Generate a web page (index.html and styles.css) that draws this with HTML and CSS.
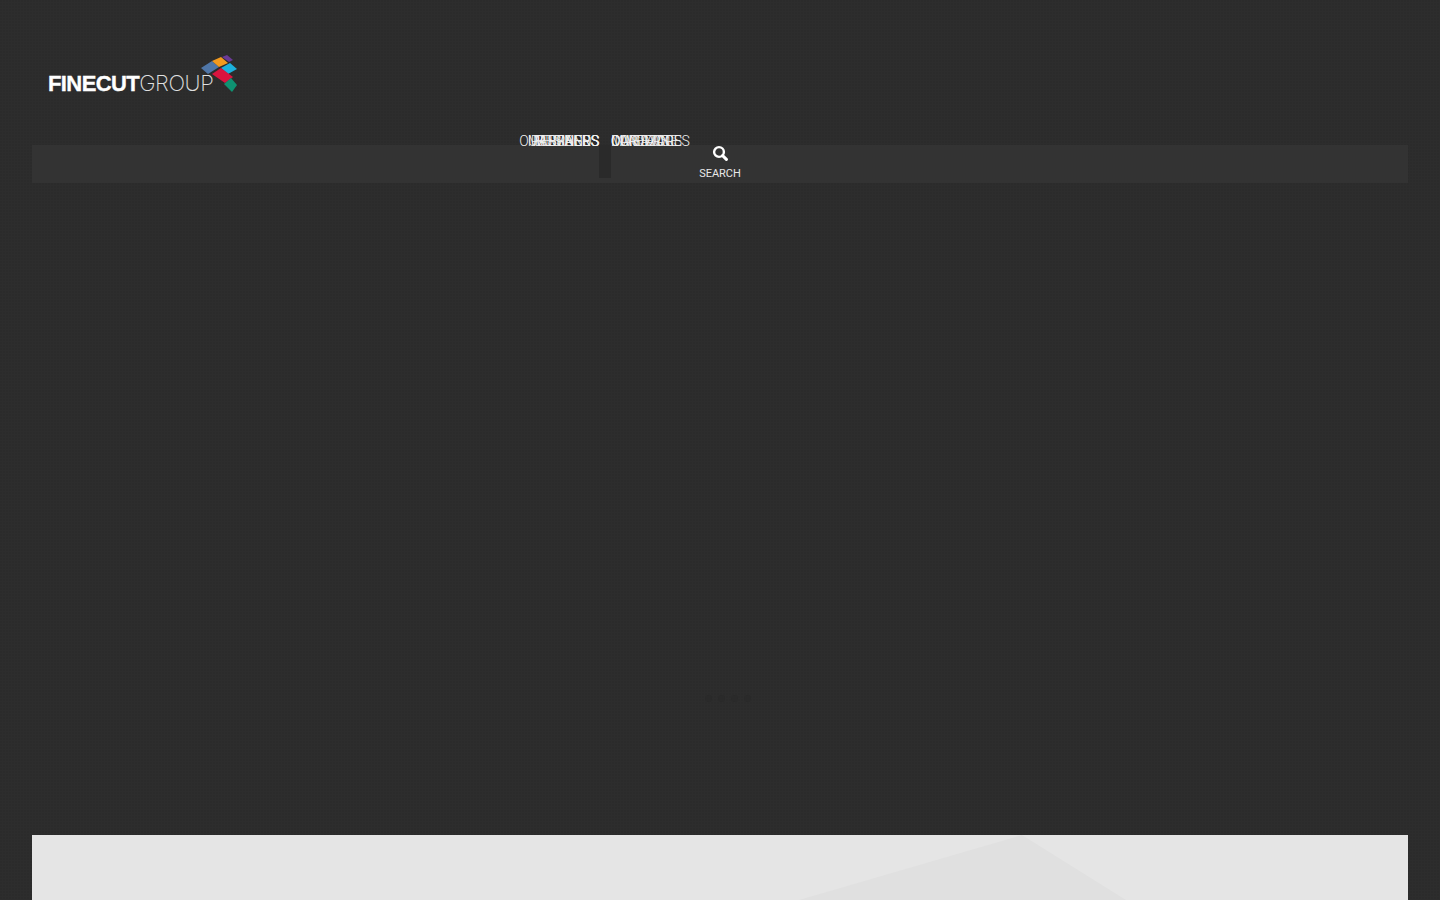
FILE: index.html
```html
<!DOCTYPE html>
<html lang="en">
<head>
<meta charset="utf-8">
<title>Finecut Group</title>
<link rel="stylesheet" href="styles.css">
</head>
<body>
<div class="page">
  <header class="top">
    <a class="logo" href="#">
      <span class="logo-word"><b>FINECUT</b><span class="logo-light">GROUP</span></span>
      <svg class="logo-mark" width="40" height="42" viewBox="0 0 40 42" aria-hidden="true">
        <polygon points="3,16 14,9 21,15 10,22" fill="#4f76a8"/>
        <polygon points="14,9 23,5 30,11 21,15" fill="#f39a1f"/>
        <polygon points="24,5 29,3 35,8 31,10" fill="#6a3a96"/>
        <polygon points="23,16 32,11 39,17 30,22" fill="#1cb0dc"/>
        <polygon points="14,22 23,16 35,25 27,31" fill="#d9143f"/>
        <polygon points="26,32 33,26 39,33 34,40" fill="#0f9272"/>
      </svg>
    </a>
  </header>
  <nav class="bar">
    <div class="side side-left">
      <a class="link link-tight">OUR BRANDS</a>
      <a class="link">MESSAGES</a>
      <a class="link">MEMBERS</a>
      <a class="link">BUSINESS</a>
      <a class="link">PARTNERS</a>
    </div>
    <span class="notch"></span>
    <div class="side side-right">
      <a class="link">CAREERS</a>
      <a class="link">CONTACT</a>
      <a class="link">INVESTORS</a>
      <a class="link">MAGAZINE</a>
      <a class="link">OUR IMAGES</a>
    </div>
    <a class="search">
      <svg width="16" height="16" viewBox="0 0 16 16" aria-hidden="true"><circle cx="7" cy="7" r="4.9" fill="none" stroke="#fff" stroke-width="2.4"/><path d="M10.6 10.6 14.4 14.4" stroke="#fff" stroke-width="3" stroke-linecap="round"/></svg>
      <span>SEARCH</span>
    </a>
  </nav>
  <div class="stage">
    <div class="loader"><i></i><i></i><i></i><i></i></div>
  </div>
  <section class="panel">
    <svg class="panel-shape" width="1376" height="65" viewBox="0 0 1376 65" aria-hidden="true"><polygon points="767,65 990,0 1094,65" fill="#e0e0e0"/></svg>
  </section>
</div>
</body>
</html>
```
FILE: styles.css
```css
html, body { margin: 0; height: 100%; }
body {
  background-color: #2d2d2d;
  background-image: radial-gradient(circle at 1px 1px, #2a2a2a 0.6px, transparent 0.9px);
  background-size: 3px 3px;
  overflow: hidden;
  font-family: Roboto, "Liberation Sans", sans-serif;
}
.page { padding: 0 32px; display: flex; flex-direction: column; height: 900px; }
.top { height: 145px; flex: none; }
.logo { display: inline-flex; align-items: flex-start; margin: 50px 0 0 16px; color: #fff; text-decoration: none; }
.logo-word { font: 22px/1 "Liberation Sans", sans-serif; letter-spacing: -0.6px; margin-top: 22px; white-space: nowrap; }
.logo-word b { font-weight: 700; -webkit-text-stroke: 0.35px #fff; }
.logo-light { font-family: Inter, sans-serif; font-weight: 200; color: #e0e0e0; font-size: 22px; letter-spacing: -0.4px; }
.logo-mark { margin: 2px 0 0 -15px; }
.bar {
  height: 38px; background: #333; position: relative;
  display: grid; grid-template-columns: 567px 12px 1fr; flex: none;
}
.side { display: grid; margin-top: -12px; height: 16px; }
.side .link { grid-area: 1 / 1; font-size: 14px; font-weight: 300; line-height: 16px; color: #f0f0f0; white-space: nowrap; }
.side .link-tight { letter-spacing: -0.5px; }
.side-left .link { justify-self: end; }
.side-right .link { justify-self: start; letter-spacing: -0.3px; }
.notch { height: 33px; background: #2a2a2a; }
.search {
  position: absolute; left: 667px; top: 0; width: 42px;
  display: flex; flex-direction: column; align-items: center; color: #e8e8e8;
  font-size: 11px; line-height: 12px;
}
.search svg { margin-top: 0; margin-bottom: 7px; }
.stage { flex: 1; display: flex; align-items: flex-start; justify-content: center; }
.loader { display: flex; gap: 6px; margin: 512px 0 0 15px; }
.loader i { width: 7px; height: 7px; border-radius: 50%; background: #2a2a2a; }
.panel { height: 65px; background: #e5e5e5; flex: none; }
.panel-shape { display: block; }
```
